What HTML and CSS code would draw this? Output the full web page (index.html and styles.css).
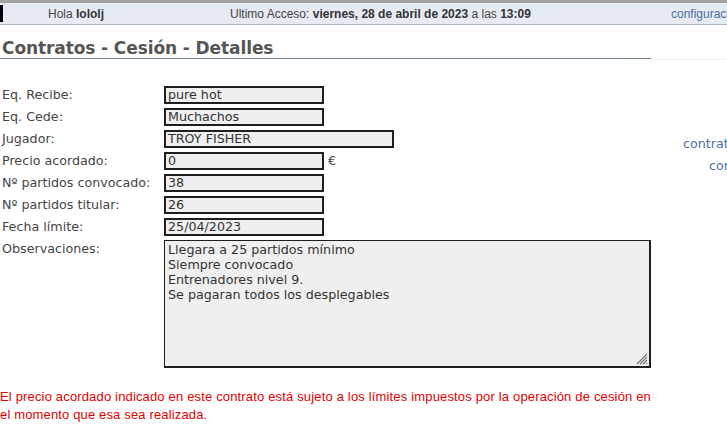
FILE: index.html
```html
<!DOCTYPE html>
<html>
<head>
<meta charset="utf-8">
<link rel="stylesheet" href="styles.css">
</head>
<body>
<div class="topbar">
  <span class="mark"></span>
  <span class="hola">Hola <b>lololj</b></span>
  <span class="acceso">Ultimo Acceso: <b>viernes, 28 de abril de 2023</b> a las <b>13:09</b></span>
  <a class="config">configuración</a>
</div>
<div class="page">
  <div class="main">
    <h1 class="title">Contratos - Cesión - Detalles</h1>
    <div class="form">
      <div class="row"><span class="label">Eq. Recibe:</span><span class="field">pure hot</span></div>
      <div class="row"><span class="label">Eq. Cede:</span><span class="field">Muchachos</span></div>
      <div class="row"><span class="label">Jugador:</span><span class="field wide">TROY FISHER</span></div>
      <div class="row"><span class="label">Precio acordado:</span><span class="field">0</span><span class="unit">€</span></div>
      <div class="row"><span class="label">Nº partidos convocado:</span><span class="field">38</span></div>
      <div class="row"><span class="label">Nº partidos titular:</span><span class="field">26</span></div>
      <div class="row"><span class="label">Fecha límite:</span><span class="field">25/04/2023</span></div>
      <div class="row"><span class="label">Observaciones:</span>
        <div class="area">Llegara a 25 partidos mínimo<br>Siempre convocado<br>Entrenadores nivel 9.<br>Se pagaran todos los desplegables
          <svg class="grip" width="12" height="12" viewBox="0 0 12 12"><path d="M11 1L1 11M11 4L4 11M11 7L7 11M11 10L10 11" stroke="#777" stroke-width="1.1"/></svg>
        </div>
      </div>
    </div>
    <p class="note">El precio acordado indicado en este contrato está sujeto a los límites impuestos por la operación de cesión en el momento que esa sea realizada.</p>
  </div>
  <div class="side">
    <div class="sidelinks">
      <a class="l1">contratos</a>
      <a class="l2">contratos</a>
    </div>
  </div>
</div>
</body>
</html>
```
FILE: styles.css
```css
html, body { margin: 0; padding: 0; background: #fff; overflow: hidden; }
body { width: 727px; font-family: "DejaVu Sans", Verdana, sans-serif; }
.topbar {
  height: 21px;
  border-top: 3px solid #a2a2a2;
  border-bottom: 1px solid #a9b7c6;
  background: #e6ebf3;
  font-family: "Liberation Sans", Arial, sans-serif;
  font-size: 12px;
  color: #444;
  display: flex;
  align-items: center;
  white-space: nowrap;
  overflow: hidden;
}
.topbar b { color: #333; }
.mark { width: 3px; height: 17px; background: #000; flex: none; }
.hola { margin-left: 45px; width: 182px; flex: none; }
.acceso { width: 441px; flex: none; }
.config { color: #4d6e9c; }
.page { display: flex; width: 800px; }
.main { width: 651px; flex: none; }
.title {
  margin: 14px 0 0 0;
  padding: 0 0 0 2px;
  height: 19px;
  font-family: "DejaVu Sans", sans-serif;
  font-size: 17px;
  font-weight: bold;
  color: #555;
  line-height: 19px;
  letter-spacing: -0.1px;
  border-bottom: 1px solid #6e8196;
}
.form { margin-top: 27px; display: flex; flex-direction: column; gap: 4px; }
.row { display: flex; align-items: flex-start; }
.label {
  width: 162px; padding-left: 2px; flex: none;
  font-size: 12.7px; color: #444; line-height: 18px;
}
.field {
  width: 152px; height: 14px;
  border: 2px solid #1e1e1e;
  background: #efefef;
  font-size: 12.7px; color: #333;
  padding: 0 2px; line-height: 14px;
  flex: none; white-space: nowrap;
}
.field.wide { width: 222px; }
.unit { font-size: 12.7px; color: #444; margin-left: 4px; line-height: 18px; }
.area {
  position: relative;
  width: 479px; height: 124px;
  border: 2px solid #1e1e1e; border-width: 1px 2px 2px 1px;
  background: #efefef;
  font-size: 12.7px; color: #333; line-height: 15px;
  padding: 1px 3px 0 3px;
}
.grip { position: absolute; right: 1px; bottom: 1px; }
.note {
  margin: 20px 0 0 0;
  font-family: "Liberation Sans", Arial, sans-serif;
  font-size: 13px; line-height: 18px;
  letter-spacing: 0.15px;
  color: #e40000;
  text-align: justify;
  width: 651px;
}
.side { flex: none; width: 149px; border-top: 1px solid #eef0f2; margin-top: 34px; }
.sidelinks { display: flex; flex-direction: column; align-items: flex-start; margin-top: 76px; gap: 6px; font-size: 12.7px; }
.sidelinks a { color: #4d6e9c; line-height: 16px; }
.l1 { margin-left: 32px; }
.l2 { margin-left: 58px; }
```
